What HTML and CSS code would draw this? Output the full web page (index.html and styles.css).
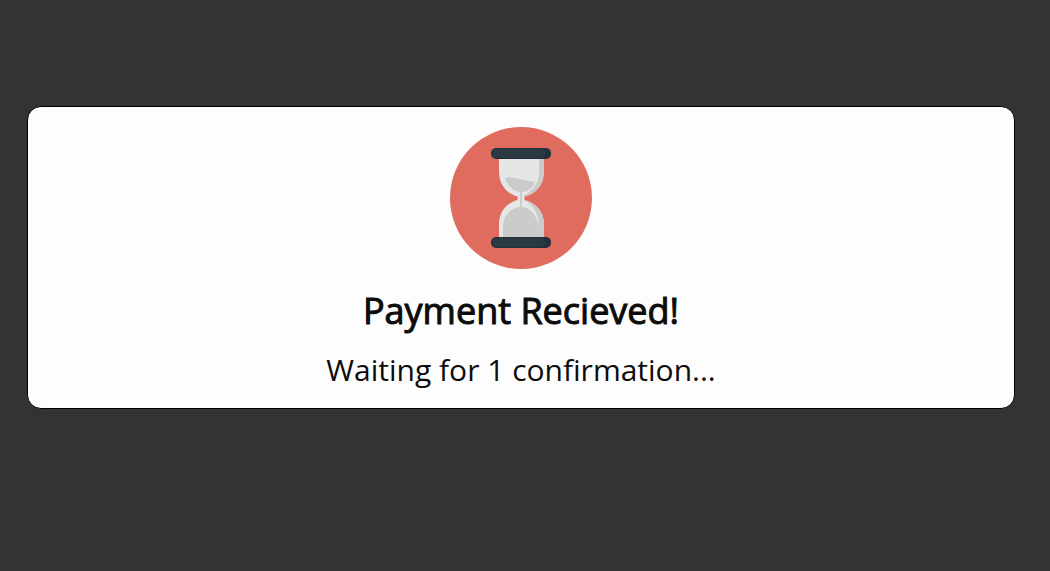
FILE: index.html
```html
<!DOCTYPE html>
<html lang="en">
<head>
<meta charset="utf-8">
<meta name="viewport" content="width=device-width, initial-scale=1">
<title>Payment Recieved!</title>
<link rel="stylesheet" href="styles.css">
</head>
<body class="page">
<main class="card" role="status">
<svg class="card-icon" viewBox="0 0 142 142" aria-hidden="true">
<circle cx="71" cy="71" r="71" fill="#e06c60"/>
<path d="M49 31V44C49 58 57 67 67.500 69.500V73C57 76 49 84 49 98V111H94V98C94 84 86 76 74.500 73V69.500C86 67 94 58 94 44V31Z" fill="#e6e6e6"/>
<path d="M89 31H94V44C94 58 86 67 74.500 69.500L73 69C84 63 89 56 89 44Z" fill="#cbcbcb"/>
<path d="M55 51C65 49 74 54 85 55C83 61 77 65 72 65V80H70V65C63 64 57 58 55 51Z" fill="#cbcbcb"/>
<path d="M53 111V100C53 88 62 80 71 80C82 80 87 90 89 101C89 88 84 78 74 73C87 77 94 85 94 98V111Z" fill="#cbcbcb"/>
<rect x="41" y="21" width="60" height="11" rx="5" fill="#22303b"/>
<rect x="41" y="110" width="60" height="11" rx="5" fill="#22303b"/>
<rect x="42" y="22" width="53" height="9" rx="4" fill="#293a43"/>
<rect x="42" y="111" width="53" height="9" rx="4" fill="#293a43"/>
</svg>
<h1 class="card-title">Payment Recieved!</h1>
<p class="card-text">Waiting for 1 confirmation...</p>
</main>
</body>
</html>
```
FILE: styles.css
```css
* {
  box-sizing: border-box;
}

.page {
  min-height: 100vh;
  margin: 0;
  padding: 106px 35px 24px 27px;
  background: #333;
  color: #0c0c0c;
  font-family: "Open Sans", "Noto Sans", sans-serif;
}

.card {
  display: flex;
  flex-direction: column;
  align-items: center;
  padding: 20px 20px 14px;
  border: 1px solid #000;
  border-radius: 14px;
  background: #fdfdfd;
  text-align: center;
}

.card-icon {
  width: 142px;
  height: 142px;
}

.card-title {
  margin: 16px 0 9px;
  font-size: 36px;
  font-weight: 400;
  line-height: 52px;
  -webkit-text-stroke: 1px #0c0c0c;
}

.card-text {
  margin: 0;
  font-size: 30px;
  font-weight: 400;
  line-height: 48px;
}
```
